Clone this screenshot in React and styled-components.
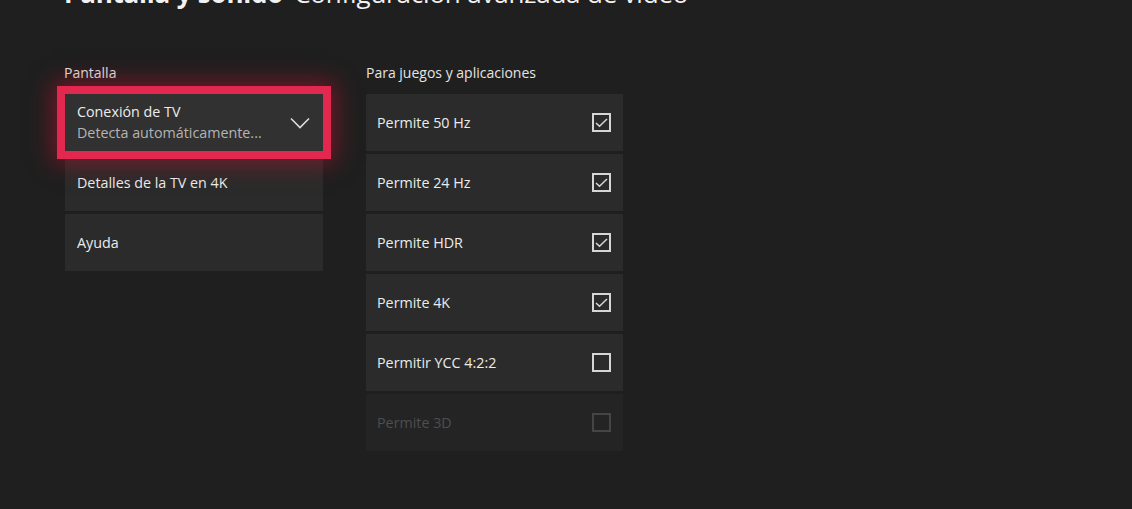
import React from "react";
import styled, { createGlobalStyle } from "styled-components";

const GlobalStyle = createGlobalStyle`
  html, body {
    margin: 0;
    padding: 0;
    background: #1f1f1f;
  }
  body {
    font-family: "Open Sans", "Noto Sans", sans-serif;
    -webkit-font-smoothing: antialiased;
  }
`;

const Page = styled.div`
  width: 1132px;
  height: 509px;
  overflow: hidden;
  background: #1f1f1f;
  padding-left: 64px;
  box-sizing: border-box;
`;

const Header = styled.h1`
  margin: -26px 0 0 0;
  font-size: 26px;
  line-height: 38px;
  font-weight: 400;
  color: #f2f2f2;
  white-space: nowrap;
  letter-spacing: -0.2px;
`;

const Strong = styled.span`
  font-weight: 700;
  margin-right: 11px;
`;

const Columns = styled.div`
  display: flex;
  gap: 43px;
  margin-top: 51px;
`;

const Column = styled.div`
  width: ${({ $w }) => $w}px;
  display: flex;
  flex-direction: column;
`;

const Label = styled.div`
  font-size: 14px;
  line-height: 20px;
  color: #e4e4e4;
  margin-bottom: 11px;
`;

const List = styled.div`
  display: flex;
  flex-direction: column;
  gap: 3px;
  margin-left: ${({ $shift }) => $shift || 0}px;
`;

const Row = styled.div`
  position: relative;
  height: 57px;
  box-sizing: border-box;
  padding: 0 12px 0 ${({ $pad }) => $pad || 11}px;
  display: flex;
  align-items: center;
  justify-content: space-between;
  background: ${({ $disabled }) => ($disabled ? "#242424" : "#2b2b2b")};
  color: ${({ $disabled }) => ($disabled ? "#4e4e4e" : "#ececec")};
  font-size: 14.3px;
  ${({ $focused }) =>
    $focused &&
    `
    background: #313131;
    z-index: 1;
    box-shadow: 0 0 0 8px #e2284e, 0 0 22px 12px rgba(200, 16, 46, 0.5);
  `}
`;

const RowText = styled.div`
  display: flex;
  flex-direction: column;
  gap: 1px;
`;

const Title = styled.span`
  line-height: 20px;
`;

const Sub = styled.span`
  font-size: 14.3px;
  line-height: 20px;
  color: #b4b4b4;
`;

const Chevron = () => (
  <svg width="20" height="12" viewBox="0 0 20 12" style={{ marginRight: 1 }}>
    <polyline
      points="1,1.5 10,10.5 19,1.5"
      fill="none"
      stroke="#dcdcdc"
      strokeWidth="1.6"
    />
  </svg>
);

const Check = ({ checked, disabled }) => {
  const c = disabled ? "#454545" : "#d6d6d6";
  return (
    <svg width="19" height="19" viewBox="0 0 19 19">
      <rect x="1" y="1" width="17" height="17" fill="none" stroke={c} strokeWidth="2" />
      {checked && (
        <polyline
          points="4,10 7.5,13.3 15,6"
          fill="none"
          stroke={c}
          strokeWidth="1.5"
        />
      )}
    </svg>
  );
};

const leftItems = [
  { title: "Conexión de TV", sub: "Detecta automáticamente...", focused: true },
  { title: "Detalles de la TV en 4K" },
  { title: "Ayuda" },
];

const rightItems = [
  { title: "Permite 50 Hz", checked: true },
  { title: "Permite 24 Hz", checked: true },
  { title: "Permite HDR", checked: true },
  { title: "Permite 4K", checked: true },
  { title: "Permitir YCC 4:2:2", checked: false },
  { title: "Permite 3D", checked: false, disabled: true },
];

export default function App() {
  return (
    <Page>
      <GlobalStyle />
      <Header>
        <Strong>Pantalla y sonido</Strong>Configuración avanzada de vídeo
      </Header>
      <Columns>
        <Column $w={259}>
          <Label>Pantalla</Label>
          <List $shift={1}>
            {leftItems.map((it) => (
              <Row key={it.title} $focused={it.focused} $pad={12}>
                <RowText>
                  <Title>{it.title}</Title>
                  {it.sub && <Sub>{it.sub}</Sub>}
                </RowText>
                {it.focused && <Chevron />}
              </Row>
            ))}
          </List>
        </Column>
        <Column $w={257}>
          <Label>Para juegos y aplicaciones</Label>
          <List>
            {rightItems.map((it) => (
              <Row key={it.title} $disabled={it.disabled}>
                <Title>{it.title}</Title>
                <Check checked={it.checked} disabled={it.disabled} />
              </Row>
            ))}
          </List>
        </Column>
      </Columns>
    </Page>
  );
}
